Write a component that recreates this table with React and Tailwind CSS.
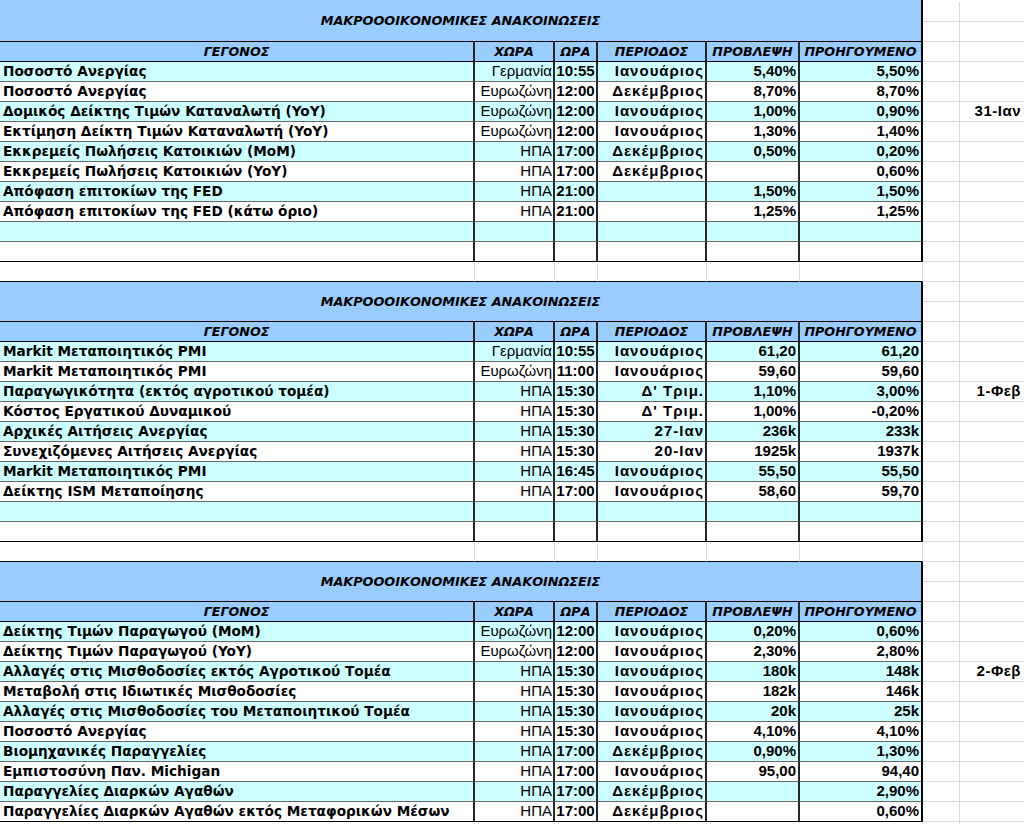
import React from "react";

const COLS = ["w-[475px]", "w-[80px]", "w-[43px]", "w-[109px]", "w-[93px]", "w-[123px]"];

const HEADERS = ["ΓΕΓΟΝΟΣ", "ΧΩΡΑ", "ΩΡΑ", "ΠΕΡΙΟΔΟΣ", "ΠΡΟΒΛΕΨΗ", "ΠΡΟΗΓΟΥΜΕΝΟ"];

const SECTIONS = [
  {
    date: "31-Ιαν",
    rows: [
      ["Ποσοστό Ανεργίας", "Γερμανία", "10:55", "Ιανουάριος", "5,40%", "5,50%"],
      ["Ποσοστό Ανεργίας", "Ευρωζώνη", "12:00", "Δεκέμβριος", "8,70%", "8,70%"],
      ["Δομικός Δείκτης Τιμών Καταναλωτή (YoY)", "Ευρωζώνη", "12:00", "Ιανουάριος", "1,00%", "0,90%"],
      ["Εκτίμηση Δείκτη Τιμών Καταναλωτή (YoY)", "Ευρωζώνη", "12:00", "Ιανουάριος", "1,30%", "1,40%"],
      ["Εκκρεμείς Πωλήσεις Κατοικιών (MoM)", "ΗΠΑ", "17:00", "Δεκέμβριος", "0,50%", "0,20%"],
      ["Εκκρεμείς Πωλήσεις Κατοικιών (YoY)", "ΗΠΑ", "17:00", "Δεκέμβριος", "", "0,60%"],
      ["Απόφαση επιτοκίων της FED", "ΗΠΑ", "21:00", "", "1,50%", "1,50%"],
      ["Απόφαση επιτοκίων της FED (κάτω όριο)", "ΗΠΑ", "21:00", "", "1,25%", "1,25%"],
      ["", "", "", "", "", ""],
      ["", "", "", "", "", ""],
    ],
  },
  {
    date: "1-Φεβ",
    rows: [
      ["Markit Μεταποιητικός PMI", "Γερμανία", "10:55", "Ιανουάριος", "61,20", "61,20"],
      ["Markit Μεταποιητικός PMI", "Ευρωζώνη", "11:00", "Ιανουάριος", "59,60", "59,60"],
      ["Παραγωγικότητα (εκτός αγροτικού τομέα)", "ΗΠΑ", "15:30", "Δ' Τριμ.", "1,10%", "3,00%"],
      ["Κόστος Εργατικού Δυναμικού", "ΗΠΑ", "15:30", "Δ' Τριμ.", "1,00%", "-0,20%"],
      ["Αρχικές Αιτήσεις Ανεργίας", "ΗΠΑ", "15:30", "27-Ιαν", "236k", "233k"],
      ["Συνεχιζόμενες Αιτήσεις Ανεργίας", "ΗΠΑ", "15:30", "20-Ιαν", "1925k", "1937k"],
      ["Markit Μεταποιητικός PMI", "ΗΠΑ", "16:45", "Ιανουάριος", "55,50", "55,50"],
      ["Δείκτης ISM Μεταποίησης", "ΗΠΑ", "17:00", "Ιανουάριος", "58,60", "59,70"],
      ["", "", "", "", "", ""],
      ["", "", "", "", "", ""],
    ],
  },
  {
    date: "2-Φεβ",
    rows: [
      ["Δείκτης Τιμών Παραγωγού (MoM)", "Ευρωζώνη", "12:00", "Ιανουάριος", "0,20%", "0,60%"],
      ["Δείκτης Τιμών Παραγωγού (YoY)", "Ευρωζώνη", "12:00", "Ιανουάριος", "2,30%", "2,80%"],
      ["Αλλαγές στις Μισθοδοσίες εκτός Αγροτικού Τομέα", "ΗΠΑ", "15:30", "Ιανουάριος", "180k", "148k"],
      ["Μεταβολή στις Ιδιωτικές Μισθοδοσίες", "ΗΠΑ", "15:30", "Ιανουάριος", "182k", "146k"],
      ["Αλλαγές στις Μισθοδοσίες του Μεταποιητικού Τομέα", "ΗΠΑ", "15:30", "Ιανουάριος", "20k", "25k"],
      ["Ποσοστό Ανεργίας", "ΗΠΑ", "15:30", "Ιανουάριος", "4,10%", "4,10%"],
      ["Βιομηχανικές Παραγγελίες", "ΗΠΑ", "17:00", "Δεκέμβριος", "0,90%", "1,30%"],
      ["Εμπιστοσύνη Παν. Michigan", "ΗΠΑ", "17:00", "Ιανουάριος", "95,00", "94,40"],
      ["Παραγγελίες Διαρκών Αγαθών", "ΗΠΑ", "17:00", "Δεκέμβριος", "", "2,90%"],
      ["Παραγγελίες Διαρκών Αγαθών εκτός Μεταφορικών Μέσων", "ΗΠΑ", "17:00", "Δεκέμβριος", "", "0,60%"],
    ],
  },
];

const tahoma = "font-['DejaVu_Sans',sans-serif]";
const arial = "font-['Liberation_Sans',Arial,sans-serif]";

// the two empty sheet columns to the right of the table
function SideCells({ date }) {
  return (
    <div className="flex h-[20px]">
      <div className="w-[37px] border-r border-b border-[#dadada]" />
      <div
        className={`w-[64px] border-b border-[#dadada] flex items-center justify-end pr-[3px] text-[15px] font-bold tracking-[0.5px] text-black ${arial}`}
      >
        {date}
      </div>
    </div>
  );
}

function SpacerRow() {
  return (
    <div className="flex h-[20px]">
      {COLS.map((w, i) => (
        <div key={i} className={`${w} border-r border-[#dadada] border-b border-b-black`} />
      ))}
      <SideCells />
    </div>
  );
}

function cellAlign(ci) {
  if (ci === 0) return "justify-end pr-[1px] font-normal";
  if (ci === 1) return "justify-center font-bold";
  if (ci === 2) return "justify-end pr-[1px] font-bold tracking-[1px]";
  return "justify-end pr-[2px] font-bold";
}

function Section({ section, first }) {
  return (
    <div>
      <div className={`flex ${first ? "h-[42px]" : "h-[40px]"}`}>
        <div
          className={`w-[923px] bg-[#99ccff] border-b border-r-2 border-black flex items-center justify-center text-[12.8px] font-bold italic ${tahoma}`}
        >
          ΜΑΚΡΟΟΟΙΚΟΝΟΜΙΚΕΣ ΑΝΑΚΟΙΝΩΣΕΙΣ
        </div>
        <div className="flex flex-col">
          <div className={first ? "h-[2px]" : "h-0"} />
          <SideCells />
          <SideCells />
        </div>
      </div>
      <div className="flex h-[20px]">
        {HEADERS.map((h, i) => (
          <div
            key={h}
            className={`${COLS[i]} bg-[#99ccff] border-b border-black border-r-2 ${
              i === 5 ? "border-r-black" : "border-r-[#262626]"
            } flex items-center justify-center text-[12.7px] font-bold italic ${tahoma}`}
          >
            {h}
          </div>
        ))}
        <SideCells />
      </div>
      {section.rows.map((r, ri) => {
        const bottom = ri === 9 ? "border-b-black" : "border-b-[#666666]";
        return (
          <div key={ri} className={`flex h-[20px] ${ri % 2 === 0 ? "bg-[#ccffff]" : "bg-white"}`}>
            <div
              className={`${COLS[0]} border-r-2 border-r-[#262626] border-b ${bottom} flex items-center pl-[3px] text-[13.65px] font-bold whitespace-nowrap overflow-hidden ${tahoma}`}
            >
              {r[0]}
            </div>
            {r.slice(1).map((v, ci) => (
              <div
                key={ci}
                className={`${COLS[ci + 1]} border-r-2 ${
                  ci === 4 ? "border-r-black" : "border-r-[#262626]"
                } border-b ${bottom} flex items-center whitespace-nowrap overflow-hidden text-[15px] ${arial} ${cellAlign(ci)}`}
              >
                {v}
              </div>
            ))}
            <div className="bg-white">
              <SideCells date={ri === 2 ? section.date : ""} />
            </div>
          </div>
        );
      })}
    </div>
  );
}

export default function App() {
  return (
    <div className="w-[1024px] h-[824px] overflow-hidden bg-white text-black">
      {SECTIONS.map((s, i) => (
        <div key={i}>
          <Section section={s} first={i === 0} />
          <SpacerRow />
        </div>
      ))}
    </div>
  );
}
